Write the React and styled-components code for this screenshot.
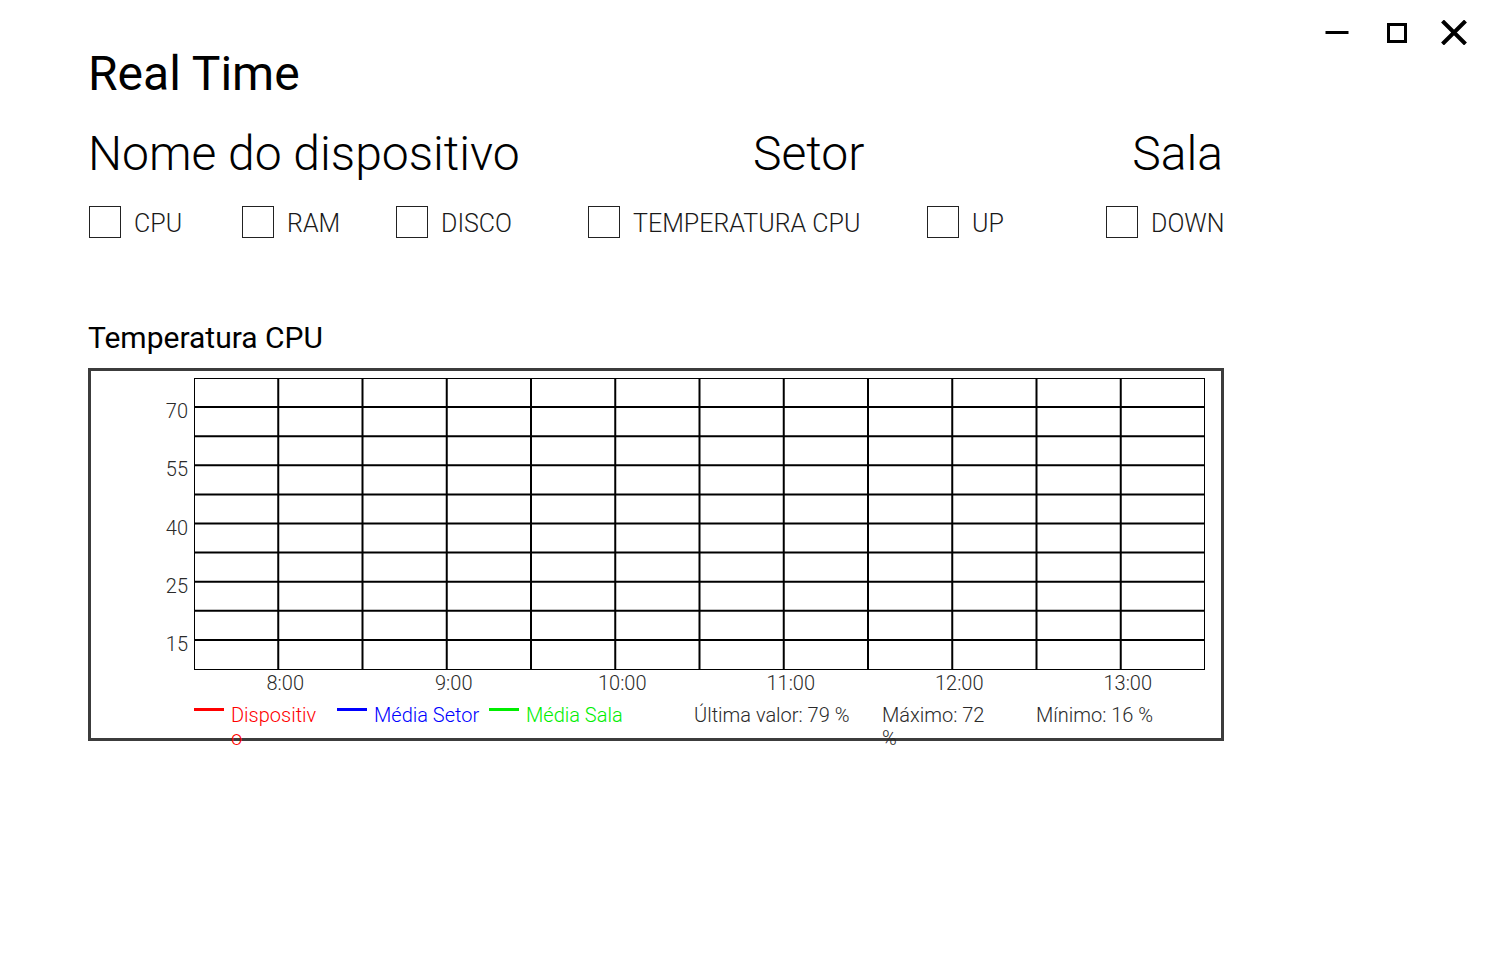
import React from "react";
import styled, { createGlobalStyle } from "styled-components";

const GlobalStyle = createGlobalStyle`
  body {
    margin: 0;
    background: #fff;
    font-family: Roboto, "Liberation Sans", sans-serif;
  }
`;

const filters = [
  { label: "CPU", width: "153px" },
  { label: "RAM", width: "154px" },
  { label: "DISCO", width: "192px" },
  { label: "TEMPERATURA CPU", width: "339px" },
  { label: "UP", width: "179px" },
  { label: "DOWN", width: "auto" },
];

const yTicks = [
  { row: 1, value: "70" },
  { row: 3, value: "55" },
  { row: 5, value: "40" },
  { row: 7, value: "25" },
  { row: 9, value: "15" },
];

const xTicks = [
  { col: 1, value: "8:00" },
  { col: 3, value: "9:00" },
  { col: 5, value: "10:00" },
  { col: 7, value: "11:00" },
  { col: 9, value: "12:00" },
  { col: 11, value: "13:00" },
];

const PLOT_X = 103;
const PLOT_Y = 7;
const PLOT_W = 1011;
const PLOT_H = 291;
const ROWS = 10;
const COLS = 12;

const WindowBar = () => (
  <Controls>
    <svg width="26" height="25" viewBox="0 0 26 25">
      <rect x="1.5" y="11" width="23" height="3" fill="#000" />
    </svg>
    <svg width="26" height="25" viewBox="0 0 26 25">
      <rect x="4.5" y="4.5" width="17" height="17" fill="none" stroke="#000" strokeWidth="3" />
    </svg>
    <svg width="26" height="25" viewBox="0 0 26 25">
      <path d="M1.5 1 L24.5 24 M24.5 1 L1.5 24" stroke="#000" strokeWidth="4" />
    </svg>
  </Controls>
);

const Chart = () => {
  const rowH = PLOT_H / ROWS;
  const colW = PLOT_W / COLS;
  return (
    <ChartSvg width="1129" height="325" viewBox="0 0 1129 325">
      <rect x={PLOT_X + 0.5} y={PLOT_Y + 0.5} width={PLOT_W - 1} height={PLOT_H} fill="none" stroke="#000" strokeWidth="1" />
      {Array.from({ length: ROWS - 1 }, (_, i) => (
        <line key={"h" + i} x1={PLOT_X} x2={PLOT_X + PLOT_W} y1={PLOT_Y + rowH * (i + 1)} y2={PLOT_Y + rowH * (i + 1)} stroke="#000" strokeWidth="2" />
      ))}
      {Array.from({ length: COLS - 1 }, (_, i) => (
        <line key={"v" + i} x1={PLOT_X + colW * (i + 1)} x2={PLOT_X + colW * (i + 1)} y1={PLOT_Y} y2={PLOT_Y + PLOT_H} stroke="#000" strokeWidth="2" />
      ))}
      {yTicks.map((t) => (
        <text key={t.value} x="97" y={PLOT_Y + rowH * t.row + 11} textAnchor="end">
          {t.value}
        </text>
      ))}
      {xTicks.map((t) => (
        <text key={t.value} x={PLOT_X + colW * t.col + 7} y="319" textAnchor="middle">
          {t.value}
        </text>
      ))}
    </ChartSvg>
  );
};

const App = () => {
  return (
    <Page>
      <GlobalStyle />
      <WindowBar />
      <Content>
        <Title>Real Time</Title>
        <InfoRow>
          <Info>Nome do dispositivo</Info>
          <Info>Setor</Info>
          <Info $align="right">Sala</Info>
        </InfoRow>
        <FilterRow>
          {filters.map((f) => (
            <Filter key={f.label} $width={f.width}>
              <Box type="checkbox" />
              <span>{f.label}</span>
            </Filter>
          ))}
        </FilterRow>

        <ChartTitle>Temperatura CPU</ChartTitle>
        <ChartCard>
          <Chart />
          <Legend>
            <LegendItem $width="143px" $color="#ff0000">
              <Swatch $color="#ff0000" />
              <LegendLabel $width="88px">Dispositivo</LegendLabel>
            </LegendItem>
            <LegendItem $width="152px" $color="#0000ff">
              <Swatch $color="#0000ff" />
              <LegendLabel>Média Setor</LegendLabel>
            </LegendItem>
            <LegendItem $width="205px" $color="#00ee00">
              <Swatch $color="#00ee00" />
              <LegendLabel>Média Sala</LegendLabel>
            </LegendItem>
            <Stat $width="188px">Última valor: 79 %</Stat>
            <Stat $width="154px" $pad="44px">Máximo: 72 %</Stat>
            <Stat>Mínimo: 16 %</Stat>
          </Legend>
        </ChartCard>
      </Content>
    </Page>
  );
};

const Page = styled.div`
  width: 100%;
  min-height: 959px;
  color: #000;
`;

const Controls = styled.div`
  display: flex;
  justify-content: flex-end;
  gap: 34px;
  height: 45px;
  padding: 20px 30px 0 0;
  box-sizing: border-box;

  svg:last-child {
    margin-left: -3px;
  }
`;

const Content = styled.div`
  padding-left: 88px;
  width: 1136px;
`;

const Title = styled.h1`
  margin: 0;
  font-size: 48px;
  font-weight: 400;
  line-height: 57.6px;
`;

const InfoRow = styled.div`
  display: grid;
  grid-template-columns: 665px auto 1fr;
  margin-top: 22px;
  width: 1135px;
`;

const Info = styled.div`
  font-size: 48px;
  font-weight: 300;
  line-height: 57.6px;
  text-align: ${(p) => p.$align || "left"};
`;

const FilterRow = styled.div`
  display: flex;
  margin-top: 24px;
  width: 1135px;
`;

const Filter = styled.label`
  display: flex;
  align-items: center;
  gap: 13px;
  width: ${(p) => p.$width};
  flex: ${(p) => (p.$width === "auto" ? "1" : "none")};
  font-size: 25px;
  font-weight: 300;
  color: #1a1a1a;

  span {
    padding-top: 3px;
  }
`;

const Box = styled.input`
  appearance: none;
  margin: 0 0 0 1px;
  width: 32px;
  height: 32px;
  border: 1px solid #222;
  background: #fff;
  box-sizing: border-box;
`;

const ChartTitle = styled.h2`
  margin: 82px 0 0;
  font-size: 30px;
  font-weight: 400;
  line-height: 36px;
`;

const ChartCard = styled.div`
  margin-top: 12px;
  width: 1136px;
  height: 373px;
  box-sizing: border-box;
  border: 3px solid #3c3c3c;
`;

const ChartSvg = styled.svg`
  display: block;

  text {
    font-family: Roboto, "Liberation Sans", sans-serif;
    font-size: 20px;
    font-weight: 300;
    fill: #2a2a2a;
  }
`;

const Legend = styled.div`
  display: flex;
  align-items: flex-start;
  padding-left: 103px;
  margin-top: 8px;
  font-size: 20px;
  font-weight: 300;
  line-height: 23px;
`;

const LegendItem = styled.div`
  display: flex;
  align-items: flex-start;
  gap: 7px;
  width: ${(p) => p.$width};
  flex: none;
  color: ${(p) => p.$color};
`;

const Swatch = styled.span`
  width: 30px;
  height: 3px;
  margin-top: 4px;
  background: ${(p) => p.$color};
  flex: none;
`;

const LegendLabel = styled.span`
  width: ${(p) => p.$width || "auto"};
  word-break: break-all;
`;

const Stat = styled.div`
  width: ${(p) => p.$width || "auto"};
  padding-right: ${(p) => p.$pad || "0"};
  box-sizing: border-box;
  flex: none;
  color: #2a2a2a;
`;

export default App;
